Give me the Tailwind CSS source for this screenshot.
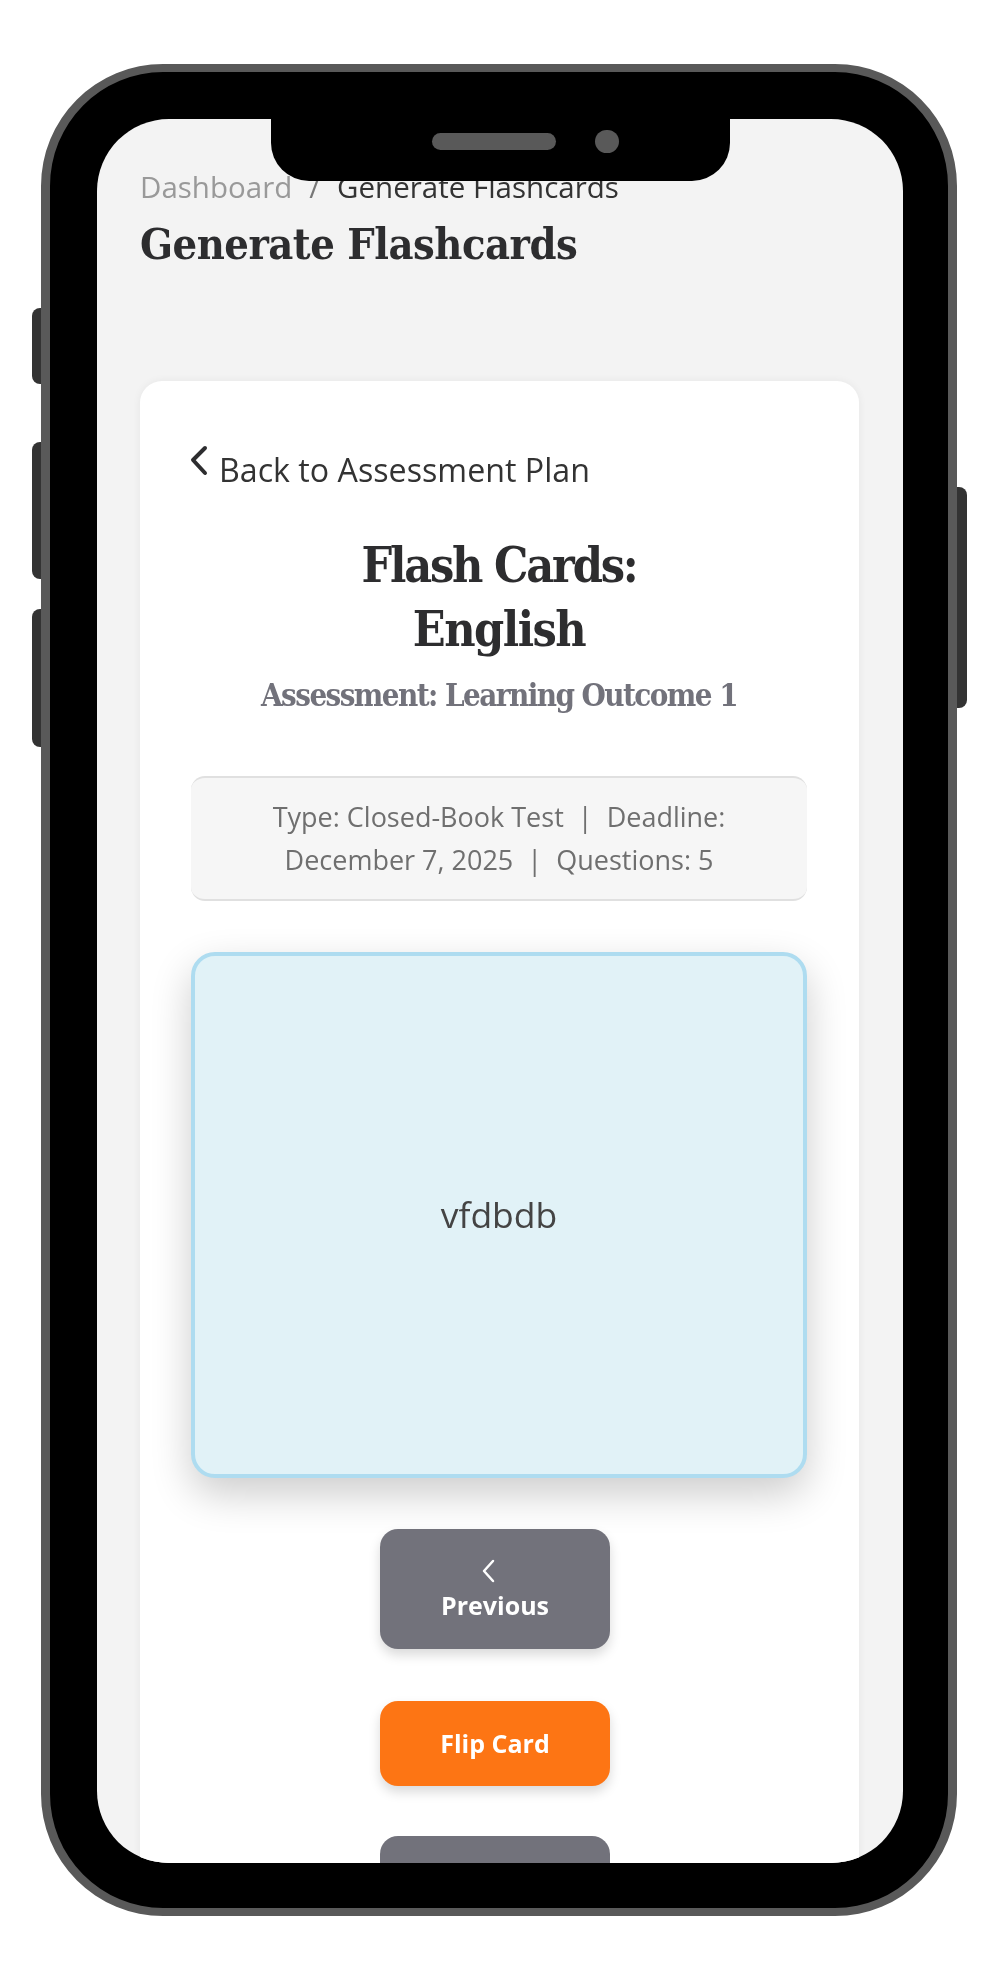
<!DOCTYPE html>
<html>
<head>
<meta charset="utf-8">
<script src="https://cdn.jsdelivr.net/npm/@tailwindcss/browser@4"></script>
</head>
<body class="bg-white">
<div class="relative w-[1000px] h-[1980px] overflow-hidden bg-white">
  <!-- side buttons -->
  <div class="absolute left-[32px] top-[308px] w-[12px] h-[76px] rounded-l-[8px] bg-[#333]"></div>
  <div class="absolute left-[32px] top-[442px] w-[12px] h-[137px] rounded-l-[8px] bg-[#333]"></div>
  <div class="absolute left-[32px] top-[609px] w-[12px] h-[138px] rounded-l-[8px] bg-[#333]"></div>
  <div class="absolute left-[955px] top-[487px] w-[12px] h-[221px] rounded-r-[8px] bg-[#333]"></div>
  <!-- phone -->
  <div class="absolute left-[41px] top-[64px] w-[916px] h-[1852px] rounded-[122px] border-x-[9px] border-y-[8px] border-[#595959] bg-black pl-[47px] pt-[47px]">
    <div class="relative w-[806px] h-[1744px] rounded-[72px] overflow-hidden bg-[#f3f3f3] font-['Open_Sans',sans-serif]">
      <div class="blur-[0.5px] pl-[43px] pr-[44px] pt-[49px]">
      <!-- breadcrumb -->
      <div class="flex items-center gap-[17px] text-[29.5px] leading-[38px] text-[#333]">
        <span class="text-[#999]">Dashboard</span><span class="text-[#777]">/</span><span>Generate Flashcards</span>
      </div>
      <h1 class="mt-[12px] font-['DejaVu_Serif_Condensed','DejaVu_Serif',serif] font-bold text-[43px] leading-[52px] text-[#2d2d2f] tracking-[-0.5px]">Generate Flashcards</h1>
      <!-- card -->
      <div class="mt-[111px] bg-white rounded-[22px] shadow-[0_0_8px_rgba(0,0,0,0.06)] pl-[51px] pr-[52px] pt-[60px] h-[1600px]">
        <div class="flex items-start text-[#333]">
          <svg class="mt-[4px] -ml-[1px] w-[18px] h-[32px]" viewBox="0 0 18 32" fill="none" stroke="#2d2d2f" stroke-width="4" stroke-linecap="round" stroke-linejoin="round"><path d="M15 3 3 15l12 13"/></svg>
          <span class="ml-[11px] mt-[8px] text-[32.2px] leading-[42px]">Back to Assessment Plan</span>
        </div>
        <div class="mt-[42px] text-center font-['DejaVu_Serif_Condensed','DejaVu_Serif',serif] font-bold text-[#2d2d2f] text-[48px] leading-[64px] tracking-[-2.2px]">Flash Cards:<br><span class="tracking-[-1.5px]">English</span></div>
        <div class="mt-[12px] text-center font-['DejaVu_Serif_Condensed','DejaVu_Serif',serif] font-bold text-[#72727b] text-[31px] leading-[44px] tracking-[-1.55px]">Assessment: Learning Outcome 1</div>
        <div class="mt-[59px] h-[125px] rounded-[14px] bg-[#f6f6f6] border-y-[2px] border-[#e0e0e0] text-center text-[#6f6f6f] text-[27px] leading-[43px] pt-[17px]">Type: Closed-Book Test &nbsp;|&nbsp; Deadline:<br>December 7, 2025 &nbsp;|&nbsp; Questions: 5</div>
        <div class="mt-[51px] h-[526px] rounded-[24px] border-[4px] border-[#aedcf0] bg-[#e1f2f7] shadow-[0_16px_40px_rgba(0,0,0,0.2)] flex items-center justify-center text-[35.5px] text-[#444]">vfdbdb</div>
        <div class="mt-[51px] w-[230px] ml-[189px] flex flex-col text-white font-bold text-[25px]">
          <div class="h-[120px] pt-[6px] rounded-[18px] bg-[#72727b] shadow-[0_6px_12px_rgba(0,0,0,0.15)] flex flex-col items-center justify-center">
            <svg class="w-[14px] h-[24px] -ml-[12px]" viewBox="0 0 14 24" fill="none" stroke="#fff" stroke-width="2.5" stroke-linecap="round" stroke-linejoin="round"><path d="M11 2 2 12l9 10"/></svg>
            <span class="mt-[2px] leading-[40px]">Previous</span>
          </div>
          <div class="mt-[52px] h-[85px] rounded-[18px] bg-[#fd7514] shadow-[0_6px_12px_rgba(0,0,0,0.15)] flex items-center justify-center">Flip Card</div>
          <div class="mt-[50px] h-[120px] rounded-[18px] bg-[#72727b]"></div>
        </div>
      </div>
      </div>
      <!-- notch -->
      <div class="absolute left-[174px] top-0 w-[459px] h-[62px] bg-black rounded-b-[38px]"></div>
      <div class="absolute left-[335px] top-[14px] w-[124px] h-[17px] rounded-full bg-[#595959]"></div>
      <div class="absolute left-[498px] top-[11px] w-[24px] h-[23px] rounded-full bg-[#595959]"></div>
    </div>
  </div>
</div>
</body>
</html>
